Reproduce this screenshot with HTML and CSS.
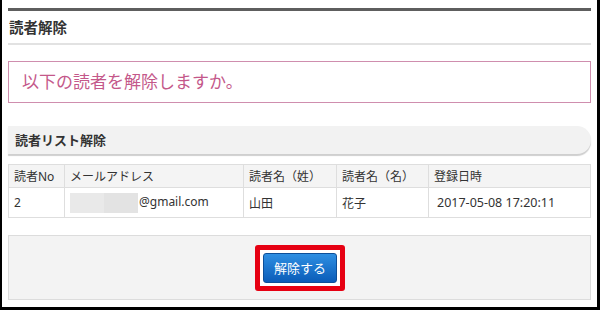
FILE: index.html
```html
<!DOCTYPE html>
<html lang="ja">
<head>
    <meta charset="UTF-8">
    <title>読者解除</title>
    <link rel="stylesheet" href="styles.css">
</head>
<body>
    <div class="frame">
        <h2 class="page-title">読者解除</h2>

        <div class="notice">以下の読者を解除しますか。</div>

        <h3 class="section-title">読者リスト解除</h3>

        <table class="readers">
            <tr>
                <th class="col-no">読者No</th>
                <th class="col-mail">メールアドレス</th>
                <th class="col-sei">読者名（姓）</th>
                <th class="col-mei">読者名（名）</th>
                <th>登録日時</th>
            </tr>
            <tr>
                <td>2</td>
                <td><span class="blur"><span class="blur-a"></span><span class="blur-b"></span></span>@gmail.com</td>
                <td>山田</td>
                <td>花子</td>
                <td class="date">2017-05-08 17:20:11</td>
            </tr>
        </table>

        <div class="actions">
            <span class="highlight">
                <button class="btn-blue">解除する</button>
            </span>
        </div>
    </div>
</body>
</html>
```

FILE: styles.css
```css
body {
    margin: 0;
    background-color: #fff;
    font-family: "Noto Sans", "Noto Sans CJK JP", sans-serif;
    color: #333;
}

.frame {
    box-sizing: border-box;
    width: 600px;
    height: 310px;
    border-left: 2px solid #000;
    border-right: 3px solid #000;
    border-bottom: 3px solid #000;
    padding: 8px 6px 0 6px;
}

.page-title {
    margin: 0;
    border-top: 3px solid #5e5e5e;
    border-bottom: 2px solid #e2e2e2;
    height: 32px;
    line-height: 32px;
    padding-left: 1px;
    font-size: 14.5px;
    font-weight: bold;
    color: #333;
}

.notice {
    margin-top: 16px;
    height: 40px;
    line-height: 40px;
    border: 1px solid #cf8eae;
    padding-left: 13px;
    font-size: 17px;
    color: #c4588a;
}

.section-title {
    margin: 23px 0 0 0;
    height: 28px;
    line-height: 29px;
    padding-left: 7px;
    background-color: #f2f2f2;
    border-radius: 0 15px 15px 0;
    box-shadow: 0 2px 1px #cfcfcf;
    font-size: 13px;
    font-weight: bold;
    color: #333;
}

.readers {
    width: 100%;
    margin-top: 10px;
    border-collapse: collapse;
    font-size: 12px;
    color: #333;
}

.readers th, .readers td {
    border: 1px solid #dedede;
    text-align: left;
    padding: 0 0 0 5px;
    font-weight: normal;
}

.readers th {
    background-color: #f4f4f4;
    height: 22px;
}

.readers td {
    height: 29px;
}

.col-no { width: 50px; }
.col-mail { width: 173px; }
.col-sei { width: 87px; }
.col-mei { width: 86px; }

.readers .date {
    padding-left: 8px;
    font-size: 12.5px;
}

.blur {
    display: inline-flex;
    vertical-align: middle;
    margin-right: 1px;
    height: 20px;
}

.blur-a {
    width: 34px;
    background-color: #e9e9e9;
}

.blur-b {
    width: 34px;
    background-color: #e3e3e3;
}

.actions {
    margin-top: 17px;
    height: 63px;
    border: 1px solid #dcdcdc;
    background-color: #f3f3f3;
    display: flex;
    align-items: center;
    justify-content: center;
}

.highlight {
    display: inline-block;
    border: 5px solid #e60012;
    border-radius: 3px;
    padding: 3px;
    background-color: #fff;
    margin-left: 1px;
}

.btn-blue {
    display: block;
    width: 74px;
    height: 30px;
    border: 1px solid #0c4f99;
    border-radius: 3px;
    background: linear-gradient(#2e8fe2, #0a5cb8);
    color: #fff;
    font-family: "Noto Sans CJK JP", sans-serif;
    font-size: 13px;
    padding: 0;
}
```
